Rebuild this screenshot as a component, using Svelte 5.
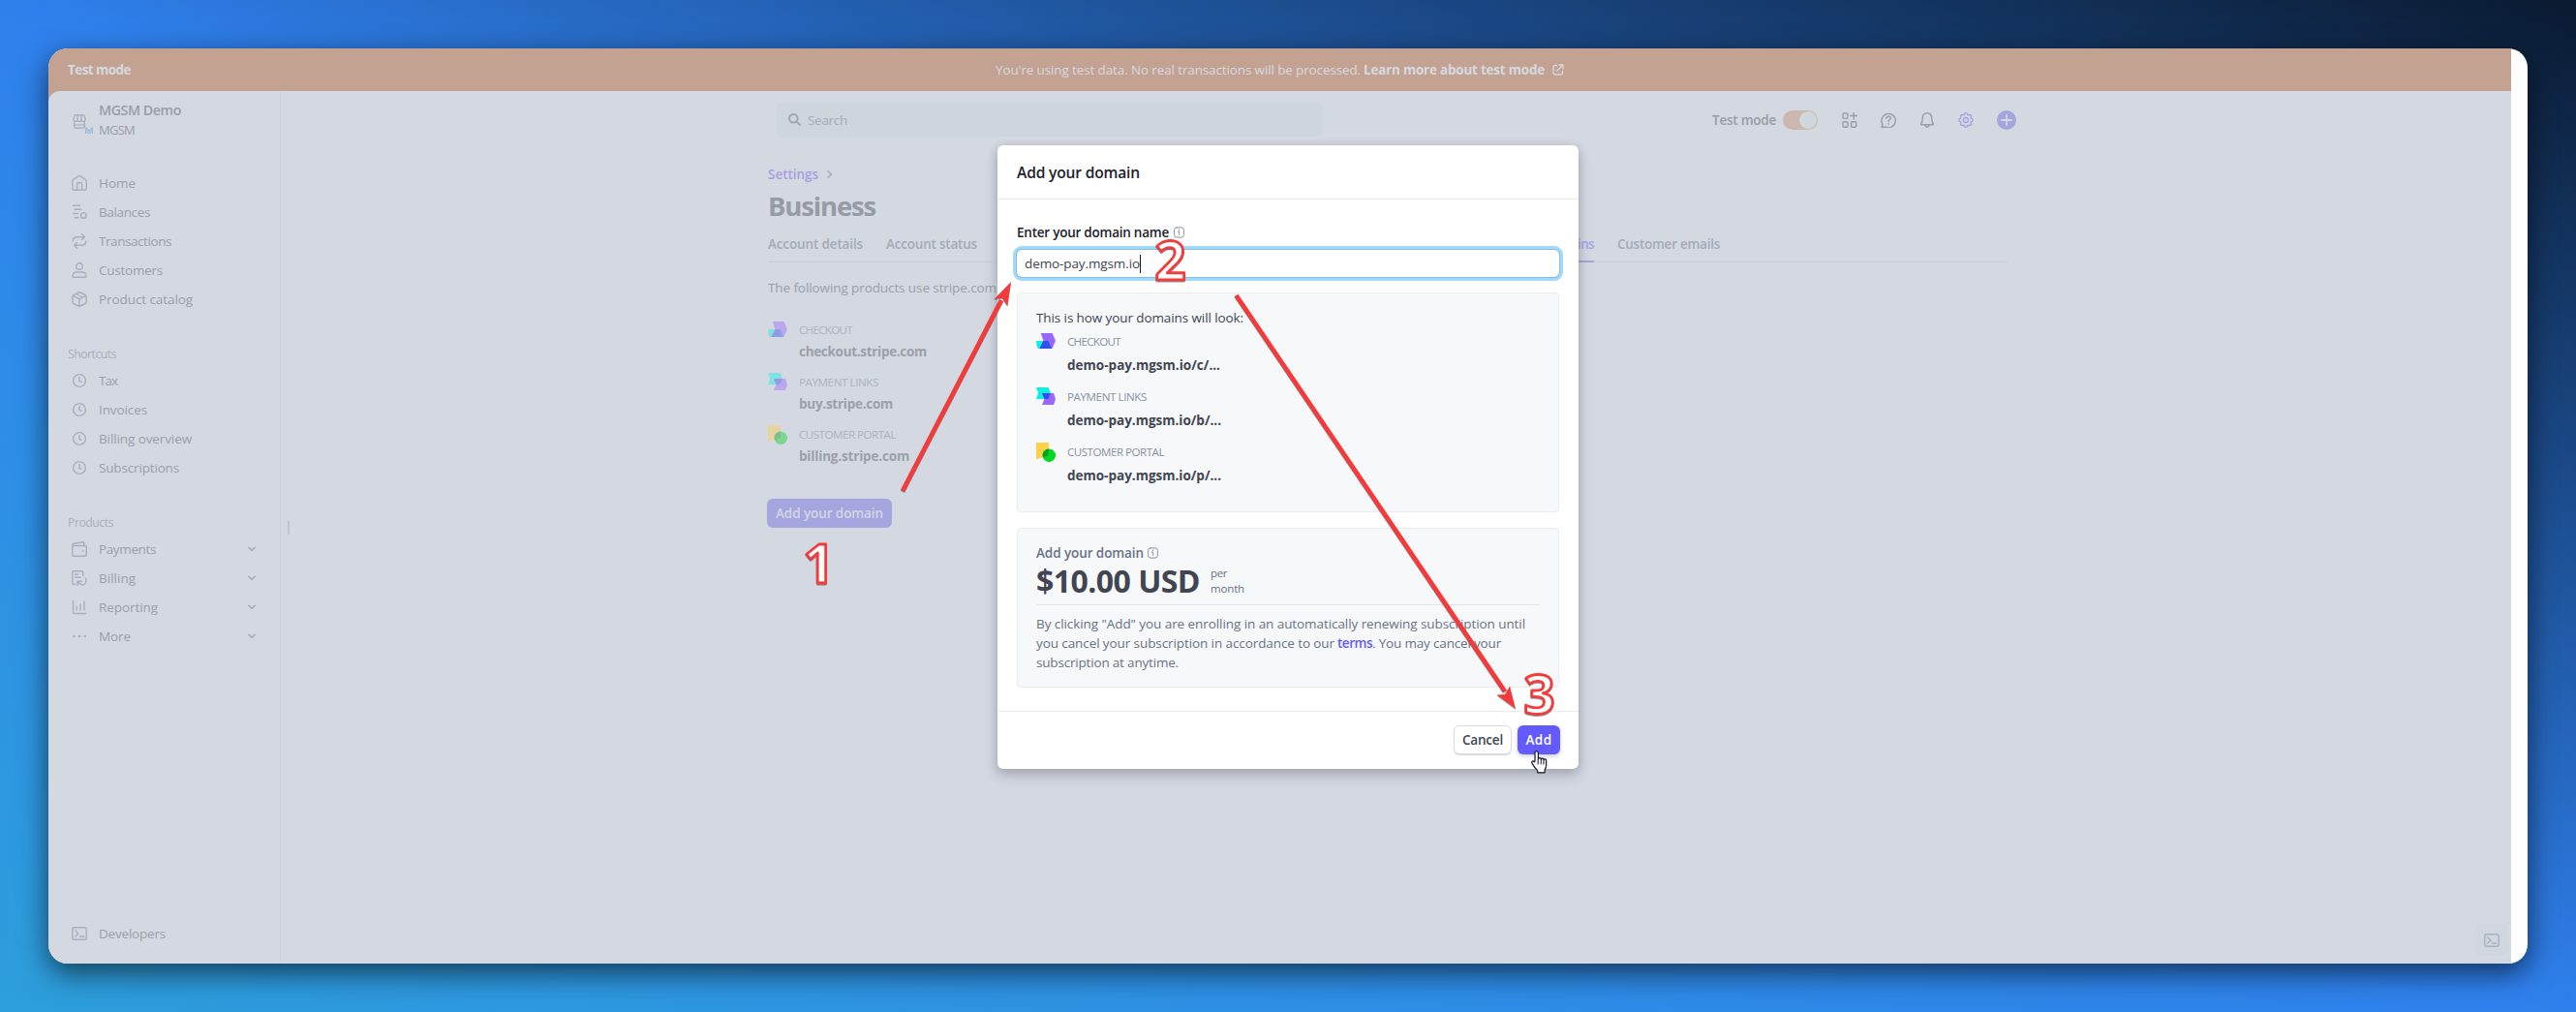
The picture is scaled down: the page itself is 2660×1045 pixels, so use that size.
<script>
  // Sets the tracking of a label so that it fills the given width.
  function fit(node, width) {
    node.style.letterSpacing = '0px';
    const natural = node.getBoundingClientRect().width;
    node.style.letterSpacing = (width - natural) / node.textContent.length + 'px';
  }

  const mainNav = [
    { icon: 'home', label: 'Home', w: 38 },
    { icon: 'balances', label: 'Balances', w: 53 },
    { icon: 'transactions', label: 'Transactions', w: 75 },
    { icon: 'customers', label: 'Customers', w: 66 },
    { icon: 'catalog', label: 'Product catalog', w: 97 }
  ];
  const shortcuts = [
    { icon: 'clock', label: 'Tax', w: 19 },
    { icon: 'clock', label: 'Invoices', w: 50 },
    { icon: 'clock', label: 'Billing overview', w: 96 },
    { icon: 'clock', label: 'Subscriptions', w: 83 }
  ];
  const products = [
    { icon: 'payments', label: 'Payments', w: 59, more: true },
    { icon: 'billing', label: 'Billing', w: 38, more: true },
    { icon: 'reporting', label: 'Reporting', w: 61, more: true },
    { icon: 'more', label: 'More', w: 33, more: true }
  ];
  const current = [
    { icon: 'checkout', label: 'CHECKOUT', w: 55, value: 'checkout.stripe.com', vw: 132 },
    { icon: 'links', label: 'PAYMENT LINKS', w: 82, value: 'buy.stripe.com', vw: 97 },
    { icon: 'portal', label: 'CUSTOMER PORTAL', w: 100, value: 'billing.stripe.com', vw: 114 }
  ];
  const preview = [
    { icon: 'checkout', label: 'CHECKOUT', w: 55, value: 'demo-pay.mgsm.io/c/...', vw: 158 },
    { icon: 'links', label: 'PAYMENT LINKS', w: 82, value: 'demo-pay.mgsm.io/b/...', vw: 159 },
    { icon: 'portal', label: 'CUSTOMER PORTAL', w: 100, value: 'demo-pay.mgsm.io/p/...', vw: 159 }
  ];
</script>

{#snippet navIcon(name)}
  <svg class="ico" width="16" height="16" viewBox="0 0 16 16">
    {#if name === 'home'}
      <path d="M.8 6.2Q.8 5 1.800 4.300L7 .9q1-.6 2 0l5.200 3.400q1 .7 1 1.900v7.600q0 1.400-1.400 1.400H2.200Q.8 15.200.8 13.800Z" /><path d="M5.500 15V8.700q0-.9.900-.9h3.200q.9 0 .9.900V15" />
    {:else if name === 'balances'}
      <path d="M1.500 1.200h7M3 5.200h7M1.500 9.500h5M3 13.800h4" /><circle cx="12.300" cy="11.400" r="2.800" />
    {:else if name === 'transactions'}
      <path d="M10.500 .8 13.500 3.700l-3 2.900M13.300 3.700H5.500Q1.300 3.700 1.300 8M5.500 15.200 2.500 12.300l3-2.900M2.700 12.300h7.800q4.200 0 4.200-4.300" />
    {:else if name === 'customers'}
      <circle cx="8" cy="4" r="3.300" /><path d="M1 14q0-4 4.200-4h5.600Q15 10 15 14q0 1.200-1.200 1.200H2.200Q1 15.200 1 14Z" />
    {:else if name === 'catalog'}
      <path d="M7.200 1q.8-.4 1.600 0l5.400 2.600q.9.500.9 1.500v5.900q0 1-.9 1.500L8.800 15q-.8.400-1.600 0l-5.400-2.500Q.9 12 .9 11V5.100q0-1 .9-1.500ZM1.200 4.300 8 7.800l6.800-3.500M8 8v7M4.500 2.500l6.800 3.500" />
    {:else if name === 'clock'}
      <circle cx="8" cy="8" r="6.400" /><path d="M8 4.500v4l2 .8" />
    {:else if name === 'payments'}
      <rect x=".8" y="4.500" width="14.400" height="10.700" rx="1.200" /><path d="M1 4.500 1.300 2.500 11.500.8q1.300-.1 1.300 1.200v2.400" /><path d="M11.300 10h.8" />
    {:else if name === 'billing'}
      <path d="M4 14.500H2Q.8 14.500.8 13.300V2Q.8.8 2 .8h8.500q1.200 0 1.200 1.200v3.500M3.500 4.300h3M3.500 7.300h5.500" /><path d="M6 15.500v-4.300h4M6.300 11.500l2.700 2.700q2.500 1.500 4.800-.5 2.200-2.600.6-5.700" />
    {:else if name === 'reporting'}
      <path d="M1.500 1.500v12q0 1 1 1h12M5.200 11V7.500M9 11V5M13 11V2" />
    {:else if name === 'more'}
      <g class="solid"><circle cx="2.300" cy="8" r="1.300" /><circle cx="8" cy="8" r="1.300" /><circle cx="13.700" cy="8" r="1.300" /></g>
    {:else if name === 'terminal'}
      <rect x=".8" y="1.800" width="14.400" height="12.400" rx="1.800" /><path d="M3.800 5 7 8l-3.200 3M8.500 11h4" />
    {/if}
  </svg>
{/snippet}

{#snippet navRow(item)}
  <div class="row">
    {@render navIcon(item.icon)}
    <span class="t" use:fit={item.w}>{item.label}</span>
    {#if item.more}
      <svg class="chev" width="8" height="6" viewBox="0 0 8 6"><path d="M.8 1.200 4 4.400 7.200 1.200" /></svg>
    {/if}
  </div>
{/snippet}

{#snippet productIcon(name)}
  <svg class="picon" width="20" height="20" viewBox="0 0 20 20">
    {#if name === 'checkout'}
      <path class="purple" d="M4.700 1H16.500L20 9l-3.600 8H9L7.500 9Z" /><path class="cyan" d="M0 9h9L4 17H2Q0 14 0 9Z" /><path class="blue" d="M7.200 9h5.300L16 17H3.400Z" />
    {:else if name === 'links'}
      <path class="cyan" d="M0 0h12.500L15 6l-2.700 6H0l2-6Z" /><path class="purple" d="M6 6h12l2 6-2 6H6l2.500-6Z" /><path class="blue" d="M6 6h9l-2.700 6H8.500Z" />
    {:else}
      <path class="yellow" d="M0 0h13v13L0 17.500Z" /><circle class="green" cx="13.300" cy="13.200" r="6.700" /><path class="deep" d="M13 6.500v6.700l-6.100 2A6.700 6.700 0 0 1 13 6.500Z" />
    {/if}
  </svg>
{/snippet}

{#snippet productItem(item)}
  <div class="item">
    {@render productIcon(item.icon)}
    <div class="lines">
      <div class="line"><span class="t cap" use:fit={item.w}>{item.label}</span></div>
      <div class="line"><span class="t val" use:fit={item.vw}>{item.value}</span></div>
    </div>
  </div>
{/snippet}

{#snippet infoIcon()}
  <svg class="info" width="11" height="12" viewBox="0 0 11 12"><rect x=".6" y=".9" width="9.800" height="10.200" rx="2.400" /><path d="M4.500 5.300h1.200v3.200M5.600 3v1" /></svg>
{/snippet}

<div class="stage">
  <div class="window">
    <div class="app">
      <div class="banner">
        <div class="mode"><span class="t b" use:fit={65}>Test mode</span></div>
        <div class="notice">
          <span class="t" use:fit={377}>You're using test data. No real transactions will be processed.</span>
          <span class="t b" use:fit={187}>Learn more about test mode</span>
          <svg width="12" height="12" viewBox="0 0 12 12"><path d="M4.500 1.500H2.700Q1 1.500 1 3.200v6.100Q1 11 2.700 11h6.100q1.700 0 1.700-1.700V7.500M7 1h4v4M11 1 4.700 7.300" /></svg>
        </div>
      </div>

      <div class="body">
        <div class="side">
          <div class="account">
            <div class="store">
              <svg width="14" height="15" viewBox="0 0 14 15"><path d="M2 .8h10l1.200 4.400Q13 7.500 11 7.500q-1.500 0-2-1.300-.5 1.300-2 1.300T5 6.200Q4.500 7.500 3 7.500 1 7.500.8 5.200ZM5 1v5M9 1v5M1.800 8v5.200q0 1 1 1h8.400q1 0 1-1V8M2 11h10" /></svg>
              <svg class="mark" width="8" height="7" viewBox="0 0 8 7"><path d="M.6 7V.8L4 4.500 7.400.8V7M2 5l2 2 2-2" /></svg>
            </div>
            <div class="names">
              <div class="line"><span class="t sb" use:fit={85}>MGSM Demo</span></div>
              <div class="line"><span class="t org" use:fit={37}>MGSM</span></div>
            </div>
          </div>
          <div class="nav">{#each mainNav as item}{@render navRow(item)}{/each}</div>
          <div class="group"><span class="t" use:fit={50}>Shortcuts</span></div>
          <div>{#each shortcuts as item}{@render navRow(item)}{/each}</div>
          <div class="group"><span class="t" use:fit={47}>Products</span></div>
          <div>{#each products as item}{@render navRow(item)}{/each}</div>
          <div class="dev">{@render navRow({ icon: 'terminal', label: 'Developers', w: 69 })}</div>
        </div>

        <div class="main">
          <div class="grip"></div>
          <div class="page">
            <div class="top">
              <div class="search">
                <svg width="13" height="13" viewBox="0 0 13 13"><circle cx="5.300" cy="5.300" r="4.300" /><path d="m8.600 8.600 3.600 3.600" /></svg>
                <span class="t" use:fit={41}>Search</span>
              </div>
              <div class="tools">
                <span class="t sb" use:fit={66}>Test mode</span>
                <div class="toggle"><div class="knob"></div></div>
                <svg class="tool" width="16" height="16" viewBox="0 0 16 16"><rect x="1" y="1" width="5" height="5.400" rx="1" /><rect x="1" y="9.800" width="5" height="5.400" rx="1" /><rect x="9.500" y="9.800" width="5.200" height="5.400" rx="1" /><path d="M12.300.3v6.400M8.800 3.500h7" /></svg>
                <svg class="tool" width="16" height="16" viewBox="0 0 16 16"><path d="M1 15.200 1.900 12.200A7.200 7.200 0 1 1 5.200 15.200ZM5.800 6.200Q6 4.200 8.100 4.200T10.300 6.100Q10.300 7.200 9 7.900 8.100 8.300 8.100 9.400" /><path d="M8.100 11.500v.5" /></svg>
                <svg class="tool" width="16" height="16" viewBox="0 0 16 16"><path d="M1.700 11.800Q3.200 10 3.200 6.500 3.200.7 8 .7t4.800 5.800q0 3.500 1.500 5.300 .3 1-.8 1H2.500q-1.100 0-.8-1ZM5.800 13.200Q6.300 15.200 8 15.200t2.200-2" /></svg>
                <svg class="tool violet" width="16" height="16" viewBox="0 0 16 16"><path d="M6.300 2.400Q6.600.8 8 .8t1.700 1.600q.6.500 1.100.5 1.400-.9 2.300.1.900.9 0 2.300 0 .5.500 1 1.600.3 1.600 1.700t-1.600 1.700q-.5.600-.5 1.100.9 1.400 0 2.300t-2.300 0q-.5 0-1.100.5-.3 1.600-1.700 1.600t-1.700-1.600q-.6-.5-1.100-.5-1.400.9-2.300 0t0-2.300q0-.5-.5-1.100Q.8 9.400.8 8t1.600-1.700q.5-.5.500-1-.9-1.400 0-2.300t2.300-.1q.5 0 1.100-.5Z" /><circle cx="8" cy="8" r="2.500" /></svg>
                <svg class="plus" width="20" height="20" viewBox="0 0 20 20"><circle cx="10" cy="10" r="10" /><path d="M10 5v10M5 10h10" /></svg>
              </div>
            </div>

            <div class="crumb">
              <span class="t sb" use:fit={52}>Settings</span>
              <svg width="6" height="8" viewBox="0 0 6 8"><path d="M1 .8 4.600 4 1 7.200" /></svg>
            </div>
            <div class="heading"><span class="t" use:fit={111}>Business</span></div>
            <div class="tabs">
              <div class="tab"><span class="t sb" use:fit={98}>Account details</span></div>
              <div class="tab"><span class="t sb" use:fit={94}>Account status</span></div>
              <div class="tab active"><span class="t sb" use:fit={53}>Domains</span></div>
              <div class="tab"><span class="t sb" use:fit={106}>Customer emails</span></div>
            </div>
            <div class="intro"><span class="t" use:fit={236}>The following products use stripe.com</span></div>
            <div class="current">{#each current as item}{@render productItem(item)}{/each}</div>
            <div class="addbtn"><span class="t sb" use:fit={111}>Add your domain</span></div>
          </div>
          <div class="console">{@render navIcon('terminal')}</div>
        </div>
      </div>
    </div>
  </div>

  <div class="modal">
    <div class="mhead"><span class="t sb" use:fit={127}>Add your domain</span></div>
    <div class="mbody">
      <div class="label"><span class="t sb" use:fit={157}>Enter your domain name</span>{@render infoIcon()}</div>
      <div class="field"><span class="t" use:fit={119}>demo-pay.mgsm.io</span><div class="caret"></div></div>
      <div class="panel look">
        <div class="line"><span class="t" use:fit={214}>This is how your domains will look:</span></div>
        <div class="preview">{#each preview as item}{@render productItem(item)}{/each}</div>
      </div>
      <div class="panel cost">
        <div class="line costname"><span class="t sb" use:fit={111}>Add your domain</span>{@render infoIcon()}</div>
        <div class="price">
          <span class="t amount" use:fit={169}>$10.00 USD</span>
          <div class="per"><div><span class="t" use:fit={17}>per</span></div><div><span class="t" use:fit={35}>month</span></div></div>
        </div>
        <div class="legal">
          <div class="line"><span class="t" use:fit={505}>By clicking "Add" you are enrolling in an automatically renewing subscription until</span></div>
          <div class="line"><span class="t" use:fit={308}>you cancel your subscription in accordance to our</span><span class="t sb terms" use:fit={36}>terms</span><span class="t" use:fit={133}>. You may cancel your</span></div>
          <div class="line"><span class="t" use:fit={147}>subscription at anytime.</span></div>
        </div>
      </div>
    </div>
    <div class="mfoot">
      <div class="btn cancel"><span class="t sb" use:fit={42}>Cancel</span></div>
      <div class="btn add"><span class="t sb" use:fit={27}>Add</span></div>
    </div>
  </div>

  <svg class="marks" width="2660" height="1045" viewBox="0 0 2660 1045">
    <g class="arrow">
      <path class="shaft" d="M932 507 1034 310M1276.500 305 1554 714" />
      <path class="head" d="m1044 291-17.500 18 8.500-1 5.300 8ZM1565 732l-19.500-14.500 8.500-.5 5-8.500Z" />
    </g>
    <g class="digits">
      <text x="829.500" y="602">1</text>
      <text x="1192.500" y="289">2</text>
      <text x="1573.500" y="736.500">3</text>
    </g>
    <path class="hand" d="M1585 785.500v-8q0-1.900 1.700-1.900t1.700 1.900v6.300q.2-1.200 1.500-1.200t1.500 1.500q.2-1 1.400-1t1.400 1.500q.2-.8 1.200-.8 1.300 0 1.300 1.600v4.600q0 2.600-1.600 4.900v2.900h-7.400v-2.200q-3-2.600-5.600-7.200-.9-1.700.2-2.400 1-.6 2.200.8Z" />
    <path class="creases" d="M1588.200 784v5M1591.200 784.500v4.500M1594 785v4" />
  </svg>
</div>

<style>
  :global(body) { margin: 0; background: #2f80ed; }
  .stage {
    position: relative; box-sizing: border-box; width: 2660px; height: 1045px; padding: 50px; overflow: hidden;
    background: linear-gradient(to top right, #2d9fdc 0%, #2f80ed 50%, #0a1a30 100%);
    font: 13.500px/20px "Open Sans", "Noto Sans", sans-serif; color: #9a9fab;
  }
  svg { display: block; flex: none; fill: none; stroke: currentColor; stroke-width: 1.4; stroke-linecap: round; stroke-linejoin: round; }
  .t { white-space: pre; display: inline-block; }
  .sb { font-weight: 600; }
  .b { font-weight: 700; }
  .line { height: 20px; display: flex; align-items: center; }

  .window { height: 945px; background: #fff; border-radius: 20px; box-shadow: 0 10px 30px rgba(0, 0, 0, .6); }
  .app { width: 2543px; height: 945px; display: flex; flex-direction: column; background: #c4a292; border-radius: 20px 0 0 20px; overflow: hidden; }
  .banner { height: 44px; flex: none; display: flex; align-items: center; color: #d5d9e0; }
  .mode { width: 978px; padding-left: 20px; box-sizing: border-box; }
  .notice { display: flex; align-items: center; gap: 3px; }
  .notice svg { margin-left: 5px; stroke-width: 1.300; }
  .body { flex: 1; display: flex; background: #d4d8e0; border-radius: 12px 0 0 0; }

  .side { width: 239px; box-sizing: border-box; flex: none; padding: 11px 25px 16px 20px; display: flex; flex-direction: column; }
  .account { display: flex; height: 40px; margin-bottom: 29px; }
  .store { width: 27px; height: 20px; margin: 13px 0 0 5px; position: relative; color: #a3a9b8; }
  .store svg { stroke-width: 1.200; }
  .mark { position: absolute; left: 13px; top: 13px; color: #9dbad8; }
  .names { font-size: 14.200px; color: #999da8; margin-top: -1px; }
  .org { font-size: 13px; font-weight: 500; }
  .row { height: 30px; display: flex; align-items: center; padding-left: 4px; gap: 12px; }
  .ico { color: #a9afbd; }
  .solid { fill: currentColor; stroke: none; }
  .chev { margin-left: auto; stroke-width: 1.500; color: #a5aab5; }
  .group { height: 20px; margin: 32px 0 2px; font-size: 12.200px; color: #a9b0bc; }
  .dev { margin-top: auto; }

  .main { flex: 1; border-left: 1px solid #cdd3db; position: relative; }
  .grip { position: absolute; left: 7px; top: 444px; width: 2px; height: 14px; background: #bcc6d0; }
  .page { margin-left: 503px; width: 1289px; padding-top: 12px; }
  .top { height: 35px; display: flex; justify-content: space-between; align-items: center; }
  .search { width: 563px; height: 35px; margin-left: 9px; border-radius: 6px; background: #ced5dd; display: flex; align-items: center; box-sizing: border-box; padding-left: 12px; gap: 7px; color: #a3acb8; }
  .search svg { stroke-width: 1.900; stroke: #9fa7b3; }
  .tools { display: flex; align-items: center; color: #989da7; }
  .toggle { width: 36px; height: 20px; border-radius: 10px; background: #ccb7ae; margin: 0 25px 0 7px; display: flex; justify-content: flex-end; padding: 1px; box-sizing: border-box; }
  .knob { width: 18px; height: 18px; border-radius: 9px; background: #d0d7dd; }
  .tool { margin-right: 24px; }
  .violet { color: #a6a5df; }
  .plus circle { fill: #a5a5df; stroke: none; }
  .plus path { stroke: #d4d8e0; stroke-width: 1.800; }
  .crumb { margin-top: 29px; height: 20px; display: flex; align-items: center; gap: 9px; color: #a59fe2; }
  .crumb svg { color: #a4aab4; }
  .heading { margin-top: 5px; height: 36px; font-size: 27.500px; line-height: 36px; font-weight: 700; color: #979ba6; }
  .tabs { margin-top: 11px; width: 1280px; height: 28px; display: flex; gap: 24px; border-bottom: 1px solid #c4cdd6; color: #a3abb7; }
  .tab { height: 29px; box-sizing: border-box; }
  .active { margin-left: 560px; color: #a5a5e0; border-bottom: 2px solid #a5a5e0; }
  .intro { margin-top: 16px; height: 20px; color: #999fa9; }
  .item { display: flex; gap: 12px; }
  .cap { font-size: 11.600px; font-weight: 500; }
  .val { font-weight: 700; }
  .picon { stroke: none; }
  .current { margin-top: 24px; }
  .current .item { height: 54px; }
  .current .line + .line { margin-top: 2px; }
  .current .cap { color: #acb4bf; }
  .current .val { color: #9aa0aa; }
  .current .picon { opacity: .42; }
  .purple { fill: #9966ff; }
  .cyan { fill: #11efe3; }
  .blue { fill: #3150e8; }
  .yellow { fill: #ffd04a; }
  .green { fill: #00d924; }
  .deep { fill: #00a31f; }
  .addbtn { margin: 22px 0 0 -1px; width: 129px; height: 30px; border-radius: 6px; background: #a5a6df; color: #d3d7e2; display: flex; align-items: center; justify-content: center; }
  .console { position: absolute; right: 5px; bottom: 10px; width: 30px; height: 29px; border-radius: 4px; background: #d1d7de; box-shadow: 0 0 2px #c2cad3; display: flex; align-items: center; justify-content: center; }

  .modal {
    position: absolute; left: 1030px; top: 150px; width: 600px; height: 644px; background: #fff; border-radius: 6px;
    box-shadow: 0 7px 14px rgba(60, 66, 87, .22), 0 2px 10px rgba(60, 66, 87, .2); display: flex; flex-direction: column; color: #414552;
  }
  .mhead { height: 55px; border-bottom: 1px solid #e7eaee; padding-left: 20px; display: flex; align-items: center; font-size: 15.600px; color: #21222d; }
  .mbody { padding: 24px 20px; }
  .label { height: 20px; display: flex; align-items: center; gap: 5px; color: #21222d; }
  .info { color: #8a93a4; stroke-width: 1; }
  .field { margin-top: 8px; height: 28px; border-radius: 5px; box-shadow: 0 0 0 1px #84bee3, 0 0 0 4px #a2d9f9; display: flex; align-items: center; padding-left: 8px; }
  .caret { width: 1px; height: 19px; background: #14151f; }
  .panel { margin-top: 16px; box-sizing: border-box; border: 1px solid #e9ecf0; border-radius: 4px; background: #f6f8fa; padding: 15px 19px; }
  .look { height: 227px; }
  .preview { margin-top: 5px; }
  .preview .item { height: 57px; }
  .preview .line + .line { margin-top: 4px; }
  .preview .cap { color: #8a92a2; }
  .cost { height: 165px; }
  .costname { gap: 4px; color: #6a7385; }
  .price { height: 43px; border-bottom: 1px solid #dfe4ea; display: flex; gap: 11px; }
  .amount { font-size: 32px; line-height: 38px; font-weight: 700; }
  .per { font-size: 11.500px; line-height: 16px; padding-top: 3px; color: #6a7385; }
  .legal { margin-top: 9px; color: #6a7385; }
  .terms { margin-left: 3px; color: #625afa; }
  .mfoot { margin-top: auto; height: 45px; border-top: 1px solid #e7eaee; padding: 14px 19px 0 0; display: flex; justify-content: flex-end; gap: 6px; }
  .btn { height: 30px; border-radius: 6px; display: flex; align-items: center; justify-content: center; }
  .cancel { width: 60px; box-shadow: inset 0 0 0 1px #d9dde3, 0 1px 1px rgba(0, 0, 0, .16); }
  .add { width: 44px; background: #635bff; color: #fff; box-shadow: 0 2px 4px rgba(60, 66, 87, .25); }

  .marks { position: absolute; left: 0; top: 0; }
  .arrow { filter: drop-shadow(0 1px .5px rgba(40, 50, 70, .45)); }
  .shaft { stroke: #f43b3b; stroke-width: 4.800; stroke-linecap: butt; }
  .head { fill: #f43b3b; stroke: none; }
  .digits { font: 700 56px "Open Sans", sans-serif; filter: drop-shadow(0 1px .5px rgba(40, 50, 70, .5)); }
  .digits text { fill: #fff; stroke: #f43b3b; stroke-width: 2.800; }
  .hand { fill: #fff; stroke: #14142c; stroke-width: 1.200; }
  .creases { stroke: #14142c; stroke-width: 1; }
</style>
